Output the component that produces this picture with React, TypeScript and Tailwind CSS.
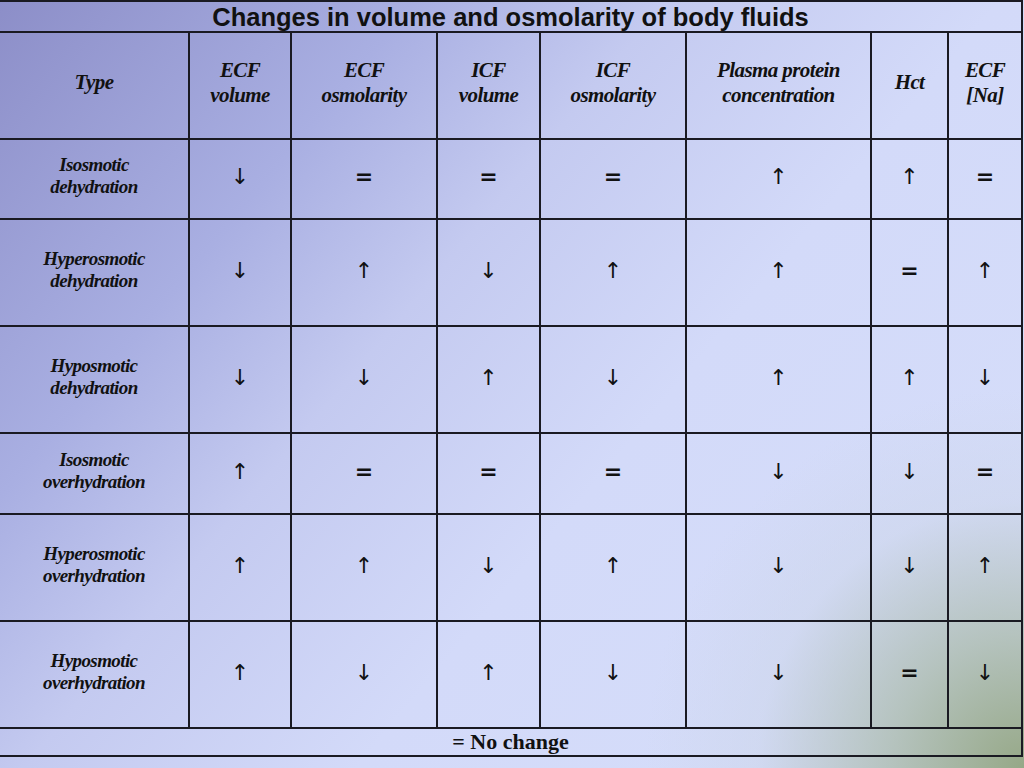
import React from "react";

const cols = [189, 102, 146, 103, 146, 185, 77, 74];
const headers = [
  ["Type"],
  ["ECF", "volume"],
  ["ECF", "osmolarity"],
  ["ICF", "volume"],
  ["ICF", "osmolarity"],
  ["Plasma protein", "concentration"],
  ["Hct"],
  ["ECF", "[Na]"],
];
const rows: { label: string[]; h: number; v: string[] }[] = [
  { label: ["Isosmotic", "dehydration"], h: 80, v: ["↓", "=", "=", "=", "↑", "↑", "="] },
  { label: ["Hyperosmotic", "dehydration"], h: 107, v: ["↓", "↑", "↓", "↑", "↑", "=", "↑"] },
  { label: ["Hyposmotic", "dehydration"], h: 107, v: ["↓", "↓", "↑", "↓", "↑", "↑", "↓"] },
  { label: ["Isosmotic", "overhydration"], h: 81, v: ["↑", "=", "=", "=", "↓", "↓", "="] },
  { label: ["Hyperosmotic", "overhydration"], h: 107, v: ["↑", "↑", "↓", "↑", "↓", "↓", "↑"] },
  { label: ["Hyposmotic", "overhydration"], h: 107, v: ["↑", "↓", "↑", "↓", "↓", "=", "↓"] },
];

export default function App() {
  return (
    <div className="relative w-[1024px] h-[768px] overflow-hidden bg-[linear-gradient(130deg,#8c8ec8_0%,#a9afe2_25%,#c4caf0_40%,#d3daf9_60%,#d6defa_100%)]">
      <div className="absolute inset-0 bg-[radial-gradient(circle_380px_at_100%_100%,rgba(150,168,135,1)_0%,rgba(170,186,170,0.75)_35%,rgba(200,210,225,0.35)_70%,rgba(214,222,250,0)_100%)]" />
      <table className="relative border-collapse table-fixed w-[1022px] text-[#111]">
        <colgroup>
          {cols.map((w, i) => (
            <col key={i} style={{ width: w }} />
          ))}
        </colgroup>
        <tbody>
          <tr className="h-[31px]">
            <td
              colSpan={8}
              className="border-2 border-[#1a1a22] border-l-0 text-center font-['Liberation_Sans',Arial,sans-serif] font-bold text-[25.5px] leading-[28px] p-0"
            >
              Changes in volume and osmolarity of body fluids
            </td>
          </tr>
          <tr className="h-[107px]">
            {headers.map((h, i) => (
              <td
                key={i}
                className={`border-2 border-[#1a1a22] ${i === 0 ? "border-l-0" : ""} text-center align-middle p-0 pb-[6px] font-['Liberation_Serif','Times_New_Roman',serif] italic font-bold text-[21px] leading-[25px] tracking-[-0.6px]`}
              >
                {h.map((l, j) => (
                  <div key={j}>{l}</div>
                ))}
              </td>
            ))}
          </tr>
          {rows.map((r, ri) => (
            <tr key={ri} style={{ height: r.h }}>
              <td className="border-2 border-[#1a1a22] border-l-0 text-center align-middle p-0 pb-[6px] font-['Liberation_Serif','Times_New_Roman',serif] italic font-bold text-[19px] leading-[22px] tracking-[-0.6px]">
                {r.label.map((l, j) => (
                  <div key={j}>{l}</div>
                ))}
              </td>
              {r.v.map((v, vi) => (
                <td
                  key={vi}
                  className={`border-2 border-[#1a1a22] text-center align-middle p-0 pb-[4px] font-['DejaVu_Sans',sans-serif] text-[22px] leading-[26px] ${v === "=" ? "font-bold" : "font-normal"}`}
                >
                  {v}
                </td>
              ))}
            </tr>
          ))}
          <tr className="h-[28px]">
            <td
              colSpan={8}
              className="border-2 border-[#1a1a22] border-l-0 text-center align-middle p-0 font-['Liberation_Serif','Times_New_Roman',serif] font-bold text-[22px] leading-[24px]"
            >
              = No change
            </td>
          </tr>
        </tbody>
      </table>
    </div>
  );
}
